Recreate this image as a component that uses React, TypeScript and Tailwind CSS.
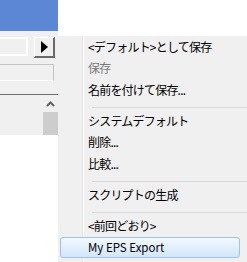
import React from "react";

const font = {
  fontFamily: '"Noto Sans CJK JP", "Noto Sans", sans-serif',
};

interface MenuEntry {
  label: string;
  disabled?: boolean;
  separator?: boolean;
}

const entries: MenuEntry[] = [
  { label: "<デフォルト>として保存" },
  { label: "保存", disabled: true },
  { label: "名前を付けて保存..." },
  { label: "", separator: true },
  { label: "システムデフォルト" },
  { label: "削除..." },
  { label: "比較..." },
  { label: "", separator: true },
  { label: "スクリプトの生成" },
  { label: "", separator: true },
  { label: "<前回どおり>" },
];

export default function App() {
  return (
    <div
      className="w-[247px] h-[262px] overflow-hidden flex bg-white"
      style={font}
    >
      {/* Dialog behind the menu */}
      <div className="w-[58px] flex flex-col">
        <div className="h-[31px] bg-[#5b87d5]" />
        <div className="h-[104px] bg-[#f0f0f0] flex flex-col pt-[6px]">
          <div className="flex items-start h-[21px]">
            <div className="w-[28px] h-[19px] border-2 border-l-0 border-white bg-[#f0f0f0]" />
            <div className="ml-[6px] w-[21px] h-[21px] border-t border-l border-white border-r-2 border-b-2 border-r-[#696969] border-b-[#696969] bg-[#f0f0f0] flex items-center justify-center">
              <svg width="7" height="12" viewBox="0 0 7 12">
                <polygon points="0,0 7,6 0,12" fill="#000" />
              </svg>
            </div>
          </div>
          <div className="mt-[6px] w-[54px] h-[17px] border-t border-r border-t-[#c4c4c4] border-r-[#c4c4c4] border-b border-b-white" />
          <div className="mt-[13px] h-px bg-[#6d6d6d]" />
          <div className="flex flex-1">
            <div className="flex-1" />
            <div className="w-[15px] flex flex-col">
              <div className="h-[17px] flex items-center justify-center">
                <svg width="9" height="6" viewBox="0 0 9 6">
                  <polyline
                    points="1,5 4.5,1.5 8,5"
                    fill="none"
                    stroke="#606060"
                    strokeWidth="2"
                  />
                </svg>
              </div>
              <div className="flex-1 bg-[#cdcdcd]" />
            </div>
          </div>
        </div>
      </div>

      {/* Context menu */}
      <div className="flex-1 flex flex-col">
        <div className="h-[36px] bg-white" />
        <div className="relative flex-1 bg-[#f0f0f0] flex flex-col">
          <div className="absolute left-[24px] top-0 bottom-0 w-px bg-[#e2e3e3]" />
          <div className="absolute left-[25px] top-0 bottom-0 w-px bg-white" />
          {entries.map((e, i) =>
            e.separator ? (
              <div key={i} className="relative h-[9.5px] pt-[6px] pl-[34px]">
                <div className="h-px bg-[#d7d7d7]" />
              </div>
            ) : (
              <div
                key={i}
                className={`relative h-[21.5px] pl-[30px] flex items-center text-[12px] tracking-[-0.8px] ${
                  e.disabled ? "text-[#7a7a7a]" : "text-black"
                }`}
              >
                {e.label}
              </div>
            )
          )}
          <div className="relative ml-[2px] w-[180px] h-[21.5px] rounded-[3px] border border-[#a3c3e6] bg-gradient-to-b from-[#f1f8fe] to-[#d2e6fa] pl-[27px] flex items-center text-[11.5px] text-black">
            My EPS Export
          </div>
        </div>
      </div>
    </div>
  );
}
